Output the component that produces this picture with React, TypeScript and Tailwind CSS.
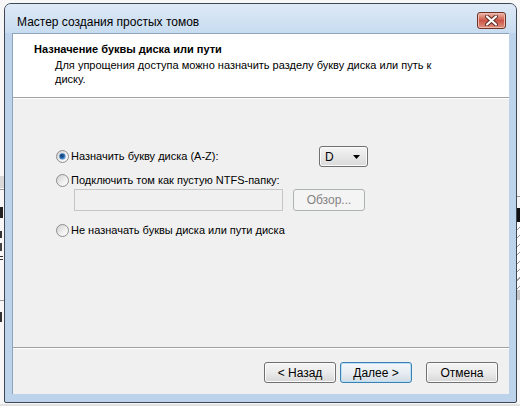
import React from 'react'

const font = "font-['Liberation_Sans',Arial,sans-serif]"

function Radio({ checked }: { checked?: boolean }) {
  return (
    <svg width="13" height="13" viewBox="0 0 13 13" className="shrink-0">
      <defs>
        <linearGradient id="rbg" x1="0" y1="0" x2="1" y2="1">
          <stop offset="0" stopColor="#cfcfcf" />
          <stop offset="0.6" stopColor="#f1f1f1" />
          <stop offset="1" stopColor="#ffffff" />
        </linearGradient>
        <radialGradient id="rdot" cx="0.4" cy="0.4" r="0.6">
          <stop offset="0" stopColor="#0d3a70" />
          <stop offset="0.6" stopColor="#2b66a6" />
          <stop offset="1" stopColor="#7bb2e6" />
        </radialGradient>
      </defs>
      <circle cx="6.5" cy="6.5" r="6" fill="url(#rbg)" stroke="#8d8d8d" strokeWidth="1" />
      {checked && <circle cx="6.5" cy="6.5" r="3.2" fill="url(#rdot)" />}
    </svg>
  )
}

function WinButton({ label, focused }: { label: string; focused?: boolean }) {
  return (
    <div
      className={
        focused
          ? 'w-[72px] h-[21px] rounded-[3px] border border-[#3c7fb1] bg-gradient-to-b from-[#f4f7fa] via-[#e7edf2] to-[#d3dce4] shadow-[inset_0_0_0_1px_#b8e0f6] flex items-center justify-center text-[12px] text-black'
          : 'w-[72px] h-[21px] rounded-[3px] border border-[#707070] bg-gradient-to-b from-[#f4f4f4] via-[#ebebeb] to-[#d7d7d7] shadow-[inset_0_0_0_1px_#fbfbfb] flex items-center justify-center text-[12px] text-black'
      }
    >
      {label}
    </div>
  )
}

export default function App() {
  return (
    <div className={`relative w-[520px] h-[406px] bg-[#f7f7f7] overflow-hidden ${font}`}>
      {/* bits of other windows behind the dialog */}
      <div className="absolute left-0 top-[176px] w-[4px] h-[12px] bg-[#d8d8d8]" />
      <div className="absolute left-0 top-[189px] w-[4px] h-px bg-[#9a9a9a]" />
      <div className="absolute left-0 top-[207px] w-[3px] h-[11px] bg-[#222]" />
      <div className="absolute left-0 top-[231px] w-[2px] h-[7px] bg-[#333]" />
      <div className="absolute left-0 top-[243px] w-[2px] h-[8px] bg-[#444]" />
      <div className="absolute left-0 top-[256px] w-[3px] h-px bg-[#333]" />
      <div className="absolute left-0 top-[259px] w-[3px] h-px bg-[#333]" />
      <div className="absolute left-0 top-[300px] w-[4px] h-px bg-[#9a9a9a]" />
      <div className="absolute left-0 top-[312px] w-[2px] h-[10px] bg-[#333]" />
      <div className="absolute right-0 top-[196px] w-[3px] h-px bg-[#9a9a9a]" />
      <div className="absolute right-0 top-[208px] w-[3px] h-[14px] bg-[#111]" />
      <div className="absolute right-0 top-[222px] w-[3px] h-[68px] bg-[repeating-linear-gradient(135deg,#ffffff_0px,#ffffff_5px,#9a9a9a_5px,#9a9a9a_6px)]" />
      <div className="absolute right-0 top-[290px] w-[3px] h-[10px] bg-[#c8c8c8]" />
      <div className="absolute left-0 top-[404px] w-[520px] h-[2px] bg-[#e2e2e2]" />

      {/* dialog window */}
      <div className="relative ml-[4px] mt-[3px] w-[513px] h-[400px] rounded-t-[7px] rounded-b-[2px] border border-[#3f4852] bg-[#bcd3eb] flex flex-col">
        <div className="h-[29px] flex items-start justify-between rounded-t-[6px] bg-gradient-to-b from-[#dde9f6] to-[#c8dcf0]">
          <div className="pl-[12px] pt-[11px] text-[12px] leading-[15px] text-black">Мастер создания простых томов</div>
          <div className="mt-[8px] mr-[10px] w-[29px] h-[17px] rounded-[3px] border border-[#6e3328] bg-gradient-to-b from-[#ecb8ab] via-[#cc5446] to-[#dc9282] shadow-[inset_0_0_0_1px_#f0b9ad] flex items-center justify-center">
            <svg width="13" height="11" viewBox="0 0 13 11">
              <path d="M2 1.5 L11 9.5 M11 1.5 L2 9.5" stroke="#5a2a22" strokeWidth="4" strokeLinecap="round" />
              <path d="M2 1.5 L11 9.5 M11 1.5 L2 9.5" stroke="#ffffff" strokeWidth="2.2" strokeLinecap="round" />
            </svg>
          </div>
        </div>

        <div className="mx-[7px] w-[497px] h-[361px] border-t border-l border-[#8ea4bd] bg-[#f0f0f0] flex flex-col">
          {/* header */}
          <div className="h-[63px] bg-white">
            <div className="pl-[21px] pt-[8px] text-[11px] font-bold leading-[15px] text-black">Назначение буквы диска или пути</div>
            <div className="pl-[42px] pr-[60px] mt-[1px] text-[11px] leading-[14px] text-black">
              Для упрощения доступа можно назначить разделу букву диска или путь к диску.
            </div>
          </div>
          <div className="h-px bg-[#a0a0a0]" />
          <div className="h-px bg-white" />

          {/* options */}
          <div className="h-[248px] pl-[43px] flex flex-col text-[11px] text-black">
            <div className="mt-[47px] h-[21px] flex items-center">
              <div className="w-[263px] flex items-center gap-[2px]">
                <Radio checked />
                <span>Назначить букву диска (A-Z):</span>
              </div>
              <div className="w-[49px] h-[21px] rounded-[3px] border border-[#707070] bg-gradient-to-b from-[#f4f4f4] to-[#dadada] shadow-[inset_0_0_0_1px_#fbfbfb] flex items-center justify-between pl-[5px] pr-[7px] text-[12px]">
                <span>D</span>
                <svg width="7" height="4" viewBox="0 0 7 4">
                  <path d="M0 0 H7 L3.5 4 Z" fill="#000" />
                </svg>
              </div>
            </div>
            <div className="mt-[4px] h-[18px] flex items-center gap-[2px]">
              <Radio />
              <span>Подключить том как пустую NTFS-папку:</span>
            </div>
            <div className="ml-[18px] h-[22px] flex gap-[10px]">
              <div className="w-[209px] h-[22px] border border-[#c6c6c6] bg-[#f0f0f0]" />
              <div className="w-[72px] h-[22px] rounded-[3px] border border-[#adb2b5] bg-[#f4f4f4] flex items-center justify-center text-[12px] text-[#838383]">
                Обзор...
              </div>
            </div>
            <div className="mt-[10px] h-[18px] flex items-center gap-[2px]">
              <Radio />
              <span>Не назначать буквы диска или пути диска</span>
            </div>
          </div>

          <div className="h-px bg-[#a0a0a0]" />
          <div className="h-px bg-white" />

          {/* buttons */}
          <div className="flex-1 flex justify-end items-start pt-[13px] pr-[11px]">
            <WinButton label="< Назад" />
            <div className="w-[4px]" />
            <WinButton label="Далее >" focused />
            <div className="w-[14px]" />
            <WinButton label="Отмена" />
          </div>
        </div>
      </div>
    </div>
  )
}
